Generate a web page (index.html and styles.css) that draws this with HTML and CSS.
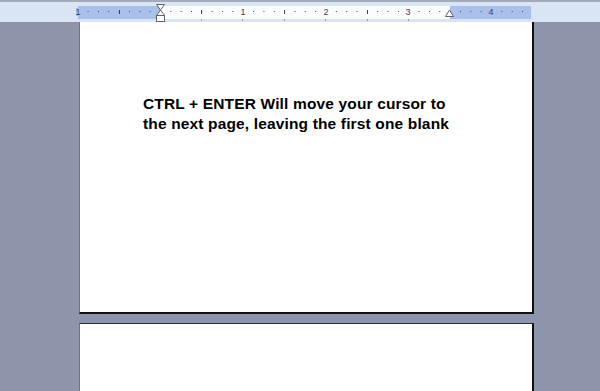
FILE: index.html
```html
<!DOCTYPE html>
<html lang="en">
<head>
    <meta charset="UTF-8">
    <meta name="viewport" content="width=device-width, initial-scale=1.0">
    <link rel="stylesheet" href="styles.css">
</head>
<body>

<div class="topbar"></div>

<div class="rulerbar">
    <svg class="ruler" width="600" height="20" viewBox="0 0 600 20">
        <defs>
            <pattern id="dots" x="160" y="0" width="10.344" height="20" patternUnits="userSpaceOnUse">
                <rect x="0" y="9" width="1" height="1" fill="#3f4450"/>
            </pattern>
        </defs>
        <!-- ruler strip -->
        <rect x="78" y="4" width="453" height="13" fill="#a9c1ea"/>
        <rect x="160" y="4" width="290" height="13" fill="#fbfcfe"/>
        <rect x="78" y="4" width="453" height="13" fill="url(#dots)"/>

        <!-- half inch ticks -->
        <g fill="#3f4450">
            <rect x="119" y="8" width="1" height="4"/>
            <rect x="201" y="8" width="1" height="4"/>
            <rect x="284" y="8" width="1" height="4"/>
            <rect x="367" y="8" width="1" height="4"/>
        </g>

        <!-- inch numbers -->
        <g class="nums">
            <rect x="76" y="6" width="5" height="8" fill="#a9c1ea"/>
            <rect x="240" y="6" width="6" height="8" fill="#fbfcfe"/>
            <rect x="323" y="6" width="6" height="8" fill="#fbfcfe"/>
            <rect x="405" y="6" width="6" height="8" fill="#fbfcfe"/>
            <rect x="488" y="6" width="6" height="8" fill="#a9c1ea"/>
            <text x="78" y="13">1</text>
            <text x="243" y="13">1</text>
            <text x="326" y="13">2</text>
            <text x="408" y="13">3</text>
            <text x="491" y="13">4</text>
        </g>

        <!-- default tab marks -->
        <g fill="#9aa2b4">
            <rect x="201" y="17" width="1" height="2"/>
            <rect x="242" y="17" width="1" height="2"/>
            <rect x="284" y="17" width="1" height="2"/>
            <rect x="325" y="17" width="1" height="2"/>
            <rect x="367" y="17" width="1" height="2"/>
            <rect x="408" y="17" width="1" height="2"/>
        </g>

        <!-- indent markers -->
        <g fill="#ffffff" stroke="#5d6270" stroke-width="1">
            <path d="M156.5 2.5 H164.5 L160.5 8 Z"/>
            <path d="M160.5 8 L164.5 13.5 H156.5 Z"/>
            <rect x="156.5" y="13.5" width="8" height="6"/>
            <path d="M449.5 8 L453.5 14.5 H445.5 Z"/>
        </g>
    </svg>
</div>

<div class="workspace">
    <div class="page page-first">
        <p class="note">CTRL + ENTER Will move your cursor to<br>the next page, leaving the first one blank</p>
    </div>
    <div class="page page-next"></div>
</div>

</body>
</html>
```

FILE: styles.css
```css
body {
    margin: 0;
    background-color: #8d95ac;
    font-family: "Liberation Sans", Arial, sans-serif;
    overflow: hidden;
}

.topbar {
    height: 2px;
    background-color: #a3aab9;
}

.rulerbar {
    height: 20px;
    background-color: #d9e4f5;
}

.ruler {
    display: block;
}

.nums text {
    font-family: "Liberation Sans", Arial, sans-serif;
    font-size: 9px;
    fill: #3c404a;
    text-anchor: middle;
}

.workspace {
    padding-left: 79px;
}

.page {
    box-sizing: border-box;
    width: 455px;
    background-color: #ffffff;
    border-left: 1px solid #6f768a;
    border-right: 2px solid #111111;
}

.page-first {
    height: 292px;
    border-bottom: 2px solid #111111;
    padding: 72px 0 0 63px;
}

.page-next {
    margin-top: 9px;
    height: 80px;
    border-top: 1px solid #2a2d36;
}

.note {
    margin: 0;
    font-size: 15.5px;
    line-height: 20px;
    letter-spacing: 0.15px;
    font-weight: bold;
    color: #000000;
}
```
